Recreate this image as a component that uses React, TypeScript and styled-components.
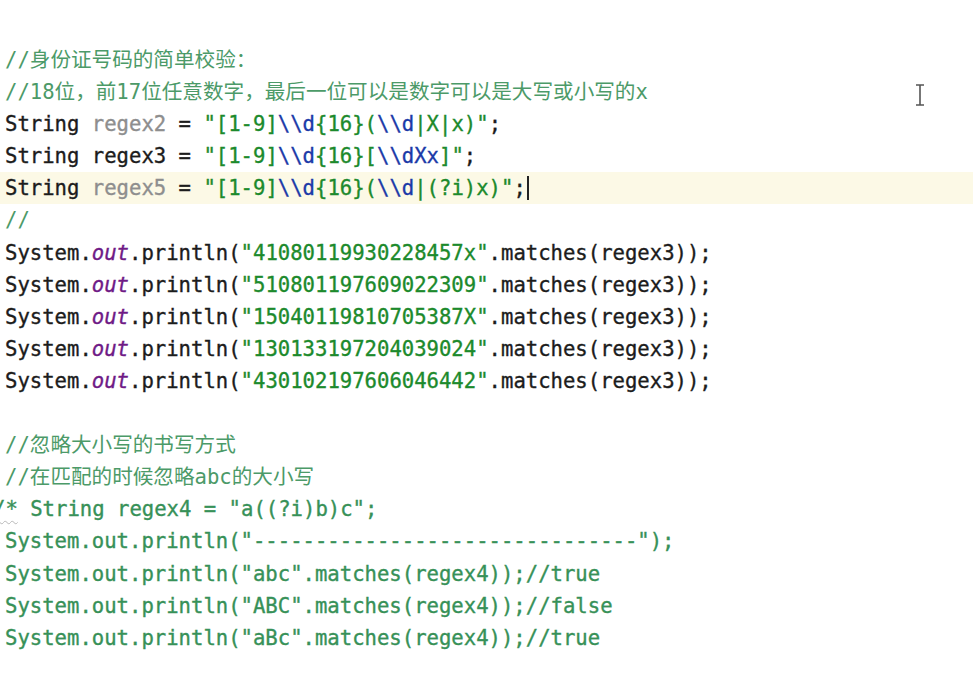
import React from "react";
import styled, { createGlobalStyle } from "styled-components";

const Global = createGlobalStyle`
  html, body { margin: 0; padding: 0; background: #ffffff; }
  body { width: 973px; height: 680px; overflow: hidden; }
`;

type Kind = "plain" | "comment" | "str" | "esc" | "unused" | "field" | "block";

const colors: Record<Kind, string> = {
  plain: "#1c1c1c",
  comment: "#4c9a68",
  str: "#1c8a2c",
  esc: "#1b3aa8",
  unused: "#8e8e8e",
  field: "#6f1a86",
  block: "#379158",
};

const Editor = styled.div`
  position: relative;
  padding-top: 44px;
  display: flex;
  flex-direction: column;
  font-family: "DejaVu Sans Mono", "Noto Sans CJK SC", monospace;
  font-size: 20.6px;
  white-space: pre;
`;

const Line = styled.div<{ $current?: boolean }>`
  height: 32.1px;
  line-height: 32.1px;
  display: flex;
  align-items: center;
  padding-left: 5px;
  background: ${(p) => (p.$current ? "#fcf9e6" : "transparent")};
`;

const Tok = styled.span<{ $kind: Kind }>`
  color: ${(p) => colors[p.$kind]};
  font-style: ${(p) => (p.$kind === "field" ? "italic" : "normal")};
  -webkit-text-stroke: ${(p) => (p.$kind === "comment" ? "0" : "0.35px")} currentColor;
`;

const Squiggle = styled.span`
  margin-left: -12px;
  color: ${colors.block};
  -webkit-text-stroke: 0.35px currentColor;
  text-decoration: underline wavy #b8b8b8;
  text-decoration-thickness: 1px;
  text-underline-offset: 4px;
`;

const Caret = styled.span`
  display: inline-block;
  width: 2px;
  height: 24px;
  background: #222;
  margin-left: 1px;
`;

const MouseCursor = styled.svg`
  position: absolute;
  left: 915px;
  top: 84px;
`;

type T = [string, Kind];

const sysOut = (num: string): T[] => [
  ["System.", "plain"],
  ["out", "field"],
  [".println(", "plain"],
  [`"${num}"`, "str"],
  [".matches(regex3));", "plain"],
];

const lines: { toks: T[]; current?: boolean; caret?: boolean; squiggle?: boolean }[] = [
  { toks: [["//身份证号码的简单校验：", "comment"]] },
  { toks: [["//18位，前17位任意数字，最后一位可以是数字可以是大写或小写的x", "comment"]] },
  {
    toks: [
      ["String ", "plain"],
      ["regex2", "unused"],
      [" = ", "plain"],
      ['"[1-9]', "str"],
      ["\\\\d", "esc"],
      ["{16}(", "str"],
      ["\\\\d", "esc"],
      ['|X|x)"', "str"],
      [";", "plain"],
    ],
  },
  {
    toks: [
      ["String regex3 = ", "plain"],
      ['"[1-9]', "str"],
      ["\\\\d", "esc"],
      ["{16}[", "str"],
      ["\\\\dXx", "esc"],
      [']"', "str"],
      [";", "plain"],
    ],
  },
  {
    current: true,
    caret: true,
    toks: [
      ["String ", "plain"],
      ["regex5", "unused"],
      [" = ", "plain"],
      ['"[1-9]', "str"],
      ["\\\\d", "esc"],
      ["{16}(", "str"],
      ["\\\\d", "esc"],
      ['|(?i)x)"', "str"],
      [";", "plain"],
    ],
  },
  { toks: [["//", "comment"]] },
  { toks: sysOut("41080119930228457x") },
  { toks: sysOut("51080119760902230" + "9") },
  { toks: sysOut("15040119810705387X") },
  { toks: sysOut("13013319720403902" + "4") },
  { toks: sysOut("43010219760604644" + "2") },
  { toks: [] },
  { toks: [["//忽略大小写的书写方式", "comment"]] },
  { toks: [["//在匹配的时候忽略abc的大小写", "comment"]] },
  { squiggle: true, toks: [[' String regex4 = "a((?i)b)c";', "block"]] },
  { toks: [['System.out.println("' + "-".repeat(31) + '");', "block"]] },
  { toks: [['System.out.println("abc".matches(regex4));//true', "block"]] },
  { toks: [['System.out.println("ABC".matches(regex4));//false', "block"]] },
  { toks: [['System.out.println("aBc".matches(regex4));//true', "block"]] },
];

export default function App() {
  return (
    <>
      <Global />
      <Editor>
        {lines.map((l, i) => (
          <Line key={i} $current={l.current}>
            {l.squiggle && <Squiggle>/*</Squiggle>}
            {l.toks.map(([t, k], j) => (
              <Tok key={j} $kind={k}>
                {t}
              </Tok>
            ))}
            {l.caret && <Caret />}
          </Line>
        ))}
        <MouseCursor width="10" height="22" viewBox="0 0 10 22">
          <path d="M1 1 H9 M5 1 V21 M1 21 H9" stroke="#555" strokeWidth="1.6" fill="none" />
        </MouseCursor>
      </Editor>
    </>
  );
}
